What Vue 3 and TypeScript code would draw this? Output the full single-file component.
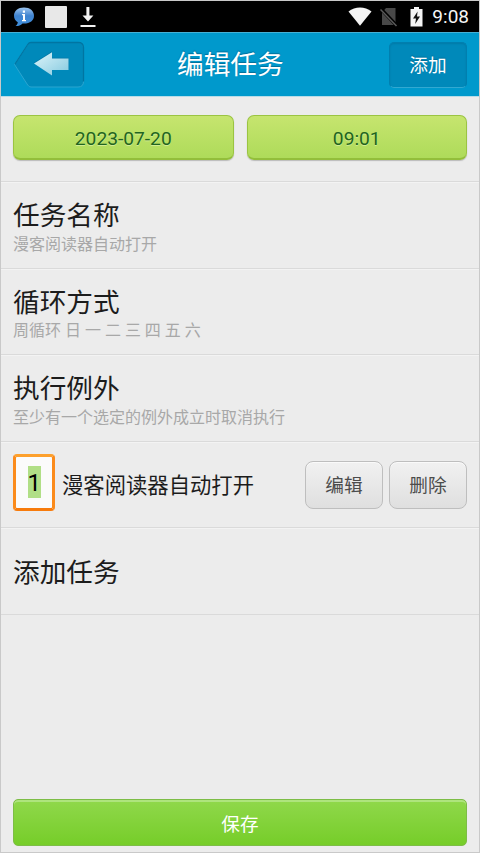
<script setup lang="ts">
interface Setting {
  title: string
  detail: string
}

const date = '2023-07-20'
const time = '09:01'

const settings: Setting[] = [
  { title: '任务名称', detail: '漫客阅读器自动打开' },
  { title: '循环方式', detail: '周循环 日 一 二 三 四 五 六' },
  { title: '执行例外', detail: '至少有一个选定的例外成立时取消执行' },
]
</script>

<template>
  <div class="screen">
    <div class="status">
      <svg class="chat" width="22" height="20" viewBox="0 0 22 20">
        <defs>
          <linearGradient id="bubble" x1="0" y1="0" x2="0" y2="1">
            <stop offset="0" stop-color="#9cc4ee" />
            <stop offset="0.45" stop-color="#3f83d0" />
            <stop offset="1" stop-color="#3f8fdc" />
          </linearGradient>
        </defs>
        <path d="M11 .5C17 .5 21 4 21 8.700S17 16.500 11 16.500L9.500 16.400C7.500 18.500 5 19.200 2.500 19C4 18 4.700 16.700 4.800 15.300C2.300 13.700 1 11.500 1 8.700C1 4 5 .5 11 .5Z" fill="url(#bubble)" />
        <path d="M9 7h3v6h1v1.300H9V13h1V8.300H9zM9.800 3.500h2.200v2.200H9.800z" fill="#fff" />
      </svg>
      <span class="tile"></span>
      <svg class="download" width="16" height="21" viewBox="0 0 16 21">
        <path d="M6.400 0h3v8.500h4L8 14.500L2.500 8.500h3.900zM.5 18h15v2H.5z" fill="#f2f2f2" />
      </svg>
      <span class="grow"></span>
      <svg class="wifi" width="24" height="19" viewBox="0 0 24 19">
        <path d="M.5 4.500C7-.9 17-.9 23.500 4.500L12 18.700Z" fill="#f4f4f4" />
      </svg>
      <svg class="nosim" width="18" height="20" viewBox="0 0 18 20">
        <path d="M6 1h9.500v17H2V5.500z" fill="#484848" />
        <path d="M.5 1.500L17 19" stroke="#000" stroke-width="3.400" />
        <path d="M.5 2.500L16.500 19" stroke="#5b5b5b" stroke-width="1.500" />
      </svg>
      <svg class="battery" width="13" height="20" viewBox="0 0 13 20">
        <path d="M4 0h5v2h3.500v17.500H.5V2H4z" fill="#f4f4f4" />
        <path d="M7.600 4.500L3 11.500h3L5.200 17L10 9.500H7z" fill="#111" />
      </svg>
      <span class="clock">9:08</span>
    </div>

    <header class="header">
      <svg class="back" width="71" height="48" viewBox="0 0 71 48">
        <defs>
          <linearGradient id="arrow" x1="0" y1="0" x2="1" y2="1">
            <stop offset="0" stop-color="#dff5fa" />
            <stop offset="1" stop-color="#84c9df" />
          </linearGradient>
        </defs>
        <path d="M17 1.500H64Q69.500 1.500 69.500 6.500V40.500Q69.500 46 64 46H17Q15 46 13.700 44L.5 23.500L13.700 3.500Q15 1.500 17 1.500Z" fill="#0089ba" stroke="#2ba5d0" />
        <path d="M1 23L13.700 3.500Q15 1.500 17 1.500H64Q69.500 1.500 69.500 6.500V40.500" fill="none" stroke="#0075a2" stroke-width="1.300" />
        <path d="M20 22.500L38 11V17.500H54.500V28.500H38V35Z" fill="#0077a6" transform="translate(0 -.8)" />
        <path d="M20 22.500L38 11.200V17.500H54.500V29H38V34.500Z" fill="url(#arrow)" />
      </svg>
      <h1 class="heading">编辑任务</h1>
      <button class="add">添加</button>
    </header>

    <section class="when">
      <button class="lime">{{ date }}</button>
      <button class="lime">{{ time }}</button>
    </section>

    <section v-for="item in settings" :key="item.title" class="row setting">
      <h2 class="title">{{ item.title }}</h2>
      <p class="detail">{{ item.detail }}</p>
    </section>

    <section class="row action">
      <span class="index"><span class="number">1</span></span>
      <span class="name">漫客阅读器自动打开</span>
      <button class="grey">编辑</button>
      <button class="grey">删除</button>
    </section>

    <section class="row new">
      <h2 class="title">添加任务</h2>
    </section>

    <footer class="footer">
      <button class="save">保存</button>
    </footer>
  </div>
</template>

<style>
body {
  background: #ececec;
}
</style>

<style scoped>
.screen {
  box-sizing: border-box;
  display: flex;
  flex-direction: column;
  width: 480px;
  height: 853px;
  overflow: hidden;
  border: 1px solid #c9c9c9;
  background: #ececec;
  font-family: Roboto, "Noto Sans CJK SC", sans-serif;
  font-weight: 400;
  color: #1c1c1c;
}

button {
  box-sizing: border-box;
  margin: 0;
  padding: 0;
  font: inherit;
}

h1,
h2,
p {
  margin: 0;
  font-weight: 400;
}

.status {
  display: flex;
  flex: none;
  align-items: center;
  height: 31px;
  padding: 0 10px 0 12px;
  background: #000;
}

.tile {
  width: 22px;
  height: 22px;
  margin: 0 13px 0 10px;
  border-radius: 1px;
  background: #e8e8e8;
}

.download {
  margin-top: 1px;
}

.grow {
  flex: 1;
}

.nosim {
  margin: 0 12px 0 8px;
}

.clock {
  margin-left: 9px;
  font-size: 19px;
  font-weight: 400;
  line-height: 31px;
  color: #f5f5f5;
}

.header {
  box-sizing: border-box;
  display: flex;
  flex: none;
  align-items: center;
  height: 65px;
  padding: 0 12px 0 13px;
  border-top: 1px solid #45b1d6;
  border-bottom: 1px solid #b8dce8;
  background: #0099cc;
  color: #fff;
  text-shadow: 0 -1px 1px #006f99;
}

.heading {
  flex: 1;
  padding-left: 92px;
  font-size: 26.67px;
  line-height: 40px;
}

.add {
  width: 78px;
  height: 46px;
  padding-bottom: 3px;
  border: 1px solid #007faf;
  border-bottom-color: #32a9d2;
  border-radius: 5px;
  background: #0089ba;
  box-shadow: inset 0 1px 2px #007aa7;
  font-size: 18.67px;
  color: #fff;
  text-shadow: 0 -1px 1px #006f99;
}

.when {
  box-sizing: border-box;
  display: flex;
  flex: none;
  gap: 13px;
  height: 85px;
  padding: 18px 12px 20px;
  border-bottom: 1px solid #dadada;
}

.lime {
  flex: 1;
  height: 45px;
  padding-top: 2px;
  border: 1px solid #9bc442;
  border-bottom: 2px solid #93be3b;
  border-radius: 7px;
  background: linear-gradient(#c6e56f, #aedb5a);
  box-shadow: 0 1px 1px #bbb;
  font-size: 19.200px;
  color: #216420;
  text-shadow: 0 1px 0 #d2ed92;
}

.row {
  box-sizing: border-box;
  flex: none;
  height: 86.6px;
  padding: 0 12px;
  border-top: 1px solid #f3f3f3;
  border-bottom: 1px solid #dadada;
}

.setting {
  padding-top: 14px;
}

.title {
  font-size: 26.67px;
  line-height: 38px;
}

.detail {
  font-size: 16px;
  line-height: 20px;
  color: #a8a8a8;
}

.setting .detail {
  margin-top: -0.5px;
}

.action {
  display: flex;
  align-items: center;
}

.index {
  box-sizing: border-box;
  display: flex;
  align-items: center;
  justify-content: center;
  width: 42px;
  height: 57px;
  margin: -6px 7px 0 0;
  border: 3px solid;
  border-color: #fda02c #fb8b1b #f77b0c;
  border-radius: 4px;
  background: #fbfbfb;
}

.number {
  width: 13px;
  height: 32px;
  background: #b1df87;
  font-size: 24px;
  line-height: 34px;
  text-align: center;
  color: #000;
}

.name {
  flex: 1;
  padding-top: 2px;
  font-size: 21.33px;
  line-height: 30px;
  white-space: nowrap;
}

.grey {
  width: 78px;
  height: 48px;
  padding-bottom: 3px;
  border: 1.500px solid #bebebe;
  border-radius: 8px;
  background: linear-gradient(#f1f1f1, #dfdfdf);
  box-shadow: inset 0 1px 0 #fafafa;
  font-size: 18.67px;
  color: #4c4c4c;
}

.grey + .grey {
  margin-left: 6px;
}

.new {
  display: flex;
  align-items: center;
  padding-top: 2px;
}

.footer {
  margin-top: auto;
  padding: 0 12px 6px;
}

.save {
  display: block;
  width: 100%;
  height: 47px;
  padding-bottom: 1px;
  border: 1px solid #7dbd46;
  border-radius: 5px;
  background: linear-gradient(#90d84b, #76cd29);
  box-shadow: inset 0 2px 0 #aee47d;
  font-size: 18.67px;
  color: #fff;
}
</style>
